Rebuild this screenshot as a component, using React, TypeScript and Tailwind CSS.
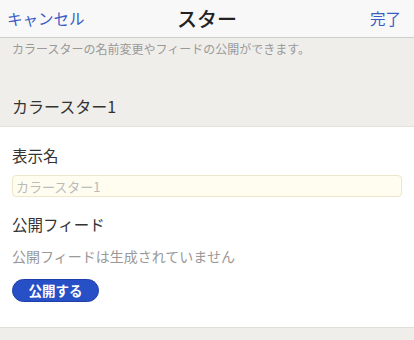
export default function App() {
  return (
    <div
      className="w-[414px] h-[340px] overflow-hidden bg-[#efeeea]"
      style={{ fontFamily: '"Noto Sans CJK JP", "Liberation Sans", sans-serif' }}
    >
      {/* Header */}
      <header className="h-[38px] grid grid-cols-3 items-center px-[7px] bg-[#f8f8f8] border-b border-[#cfcfcf]">
        <button type="button" className="justify-self-start text-[15.5px] text-[#3a5cc4] leading-none">
          キャンセル
        </button>
        <h1 className="justify-self-center text-[20px] font-medium text-[#222] leading-none">スター</h1>
        <button type="button" className="justify-self-end text-[15.5px] text-[#3a5cc4] leading-none pr-[6px]">
          完了
        </button>
      </header>

      <p className="px-[12px] pt-[2px] text-[12px] text-[#999] leading-[17px]">
        カラースターの名前変更やフィードの公開ができます。
      </p>

      <div className="h-[70px] flex items-end px-[12px] pb-[12px] border-b border-[#e2e1dc]">
        <h2 className="text-[16px] text-[#333] leading-none">カラースター1</h2>
      </div>

      {/* Body */}
      <section className="bg-white px-[12px] pt-[18px] pb-[25px] border-b border-[#e0dfda]">
        <h3 className="text-[15.5px] text-[#333] leading-[20px]">表示名</h3>
        <input
          type="text"
          placeholder="カラースター1"
          className="block mt-[10px] w-[390px] h-[22px] px-[3px] rounded-[4px] bg-[#fffdf0] border border-[#efe6c8] text-[13px] text-[#333] placeholder:text-[#bbb] outline-none"
        />

        <h3 className="mt-[17px] text-[15.5px] text-[#333] leading-[20px]">公開フィード</h3>
        <p className="mt-[12px] text-[14px] text-[#999] leading-[20px]">
          公開フィードは生成されていません
        </p>
        <button
          type="button"
          className="block mt-[13px] w-[87px] h-[23px] rounded-full bg-[#2850c6] border border-[#1e3fa8] text-white text-[13.5px] font-bold leading-none"
        >
          公開する
        </button>
      </section>
    </div>
  );
}
